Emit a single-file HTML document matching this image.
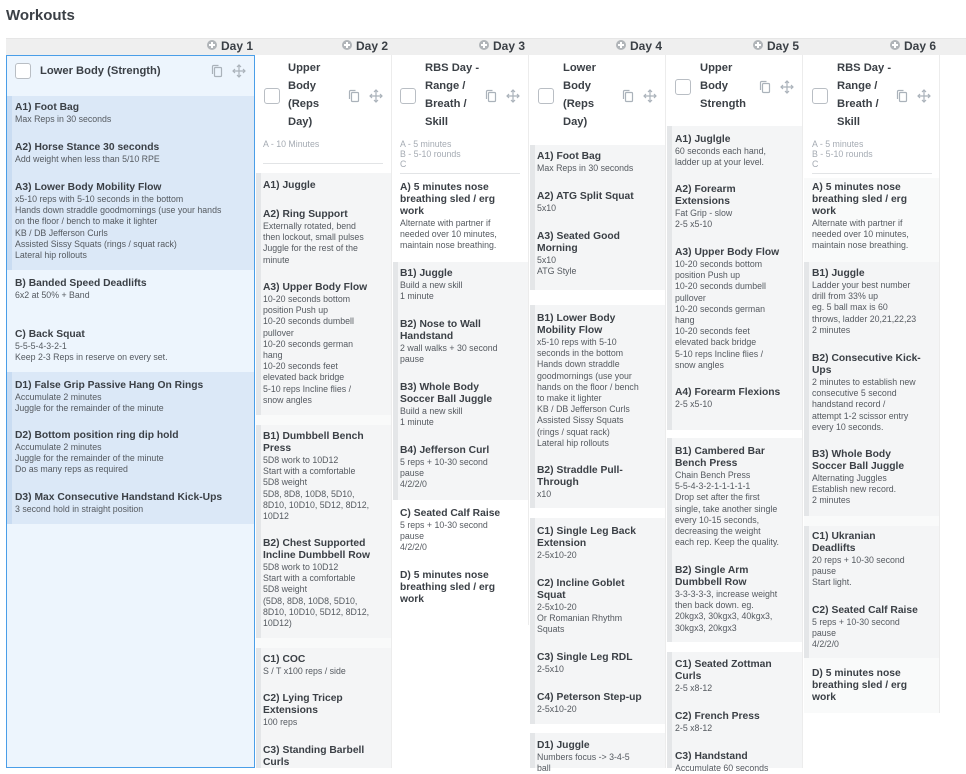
<!DOCTYPE html>
<html><head><meta charset="utf-8"><style>
*{margin:0;padding:0;box-sizing:border-box}
body{width:966px;height:768px;overflow:hidden;background:#fff;font-family:"Liberation Sans",sans-serif;color:#3b4046;position:relative}
.abs{position:absolute}
h1{position:absolute;left:6px;top:7px;font-size:15px;font-weight:bold;color:#3b4046}
.hdr{position:absolute;left:6px;top:38px;width:960px;height:17px;background:#efefef;border-top:1px solid #e6e6e6}
.day{position:absolute;top:39px;font-size:12px;font-weight:bold;color:#3b4046;white-space:nowrap;line-height:15px}
.day i{display:inline-block;width:10px;height:10px;border-radius:50%;background:#b0b4b8;margin-right:4px;position:relative;top:0px}
.day i:before,.day i:after{content:"";position:absolute;background:#fff}
.day i:before{left:2px;top:4px;width:6px;height:2px}
.day i:after{left:4px;top:2px;width:2px;height:6px}
.card{position:absolute;top:55px;background:#fff;border-right:1px solid #ececec}
.body{position:absolute;background:#f9fafa}
.g{position:absolute;background:#f4f5f6;border-left:5px solid #e4e6e8}
.g1{position:absolute;background:#dbe8f7;border-left:5px solid #c9dcf2}
.it{position:absolute;white-space:nowrap}
.it b{display:block;font-size:10.3px;line-height:12px;font-weight:bold;color:#3b4046}
.it span{display:block;font-size:8.8px;line-height:11.2px;color:#555a60}
.ht{position:absolute;font-size:11.2px;line-height:18px;font-weight:bold;color:#3b4046;white-space:nowrap}
.cb{position:absolute;width:16px;height:16px;border:1px solid #b9bec4;border-radius:3px;background:#fff}
.note{position:absolute;font-size:8.8px;line-height:10px;color:#a5abb3;white-space:nowrap}
.div{position:absolute;height:1px;background:#e2e4e6}
</style></head><body>
<h1>Workouts</h1>
<div class="hdr"></div>
<div class="day" style="left:207px"><i></i>Day 1</div>
<div class="day" style="left:342px"><i></i>Day 2</div>
<div class="day" style="left:479px"><i></i>Day 3</div>
<div class="day" style="left:616px"><i></i>Day 4</div>
<div class="day" style="left:753px"><i></i>Day 5</div>
<div class="day" style="left:890px"><i></i>Day 6</div>

<!-- Day1 -->
<div class="card" style="left:6px;width:249px;height:713px;background:#edf5fd;border:1px solid #4a9ee8"></div>
<div class="cb" style="left:15px;top:63px"></div>
<div class="ht" style="left:40px;top:62px">Lower Body (Strength)</div>
<svg class="abs" style="left:211px;top:64px" width="36" height="14" viewBox="0 0 36 14" fill="none" stroke="#aab2ba" stroke-width="1.2"><rect x="3.5" y="3.5" width="7" height="9" rx="1"/><path d="M1.5 10V2.5a1 1 0 0 1 1-1h5"/><path d="M28 1v12M22 7h12M26 3l2-2 2 2M26 11l2 2 2-2M24 5l-2 2 2 2M32 5l2 2-2 2"/></svg>
<div class="g1" style="left:7px;top:96px;width:247px;height:174px"></div>
<div class="g1" style="left:7px;top:372px;width:247px;height:152px"></div>
<div class="it" style="left:15px;top:102px"><b>A1) Foot Bag</b><span>Max Reps in 30 seconds</span></div>
<div class="it" style="left:15px;top:142px"><b>A2) Horse Stance 30 seconds</b><span>Add weight when less than 5/10 RPE</span></div>
<div class="it" style="left:15px;top:182px"><b>A3) Lower Body Mobility Flow</b><span>x5-10 reps with 5-10 seconds in the bottom<br>Hands down straddle goodmornings (use your hands<br>on the floor / bench to make it lighter<br>KB / DB Jefferson Curls<br>Assisted Sissy Squats (rings / squat rack)<br>Lateral hip rollouts</span></div>
<div class="it" style="left:15px;top:278px"><b>B) Banded Speed Deadlifts</b><span>6x2 at 50% + Band</span></div>
<div class="it" style="left:15px;top:329px"><b>C) Back Squat</b><span>5-5-5-4-3-2-1<br>Keep 2-3 Reps in reserve on every set.</span></div>
<div class="it" style="left:15px;top:380px"><b>D1) False Grip Passive Hang On Rings</b><span>Accumulate 2 minutes<br>Juggle for the remainder of the minute</span></div>
<div class="it" style="left:15px;top:430px"><b>D2) Bottom position ring dip hold</b><span>Accumulate 2 minutes<br>Juggle for the remainder of the minute<br>Do as many reps as required</span></div>
<div class="it" style="left:15px;top:492px"><b>D3) Max Consecutive Handstand Kick-Ups</b><span>3 second hold in straight position</span></div>

<!-- Day2 -->
<div class="card" style="left:256px;width:136px;height:713px"></div>
<div class="body" style="left:256px;top:173px;width:135px;height:595px"></div>
<div class="cb" style="left:264px;top:88px"></div>
<div class="ht" style="left:288px;top:59px">Upper<br>Body<br>(Reps<br>Day)</div>
<svg class="abs" style="left:348px;top:89px" width="36" height="14" viewBox="0 0 36 14" fill="none" stroke="#aab2ba" stroke-width="1.2"><rect x="3.5" y="3.5" width="7" height="9" rx="1"/><path d="M1.5 10V2.5a1 1 0 0 1 1-1h5"/><path d="M28 1v12M22 7h12M26 3l2-2 2 2M26 11l2 2 2-2M24 5l-2 2 2 2M32 5l2 2-2 2"/></svg>
<div class="note" style="left:263px;top:139px">A - 10 Minutes</div>
<div class="div" style="left:263px;top:163px;width:120px"></div>
<div class="g" style="left:256px;top:173px;width:135px;height:242px"></div>
<div class="g" style="left:256px;top:425px;width:135px;height:213px"></div>
<div class="g" style="left:256px;top:648px;width:135px;height:120px"></div>
<div class="it" style="left:263px;top:180px"><b>A1) Juggle</b></div>
<div class="it" style="left:263px;top:209px"><b>A2) Ring Support</b><span>Externally rotated, bend<br>then lockout, small pulses<br>Juggle for the rest of the<br>minute</span></div>
<div class="it" style="left:263px;top:282px"><b>A3) Upper Body Flow</b><span>10-20 seconds bottom<br>position Push up<br>10-20 seconds dumbell<br>pullover<br>10-20 seconds german<br>hang<br>10-20 seconds feet<br>elevated back bridge<br>5-10 reps Incline flies /<br>snow angles</span></div>
<div class="it" style="left:263px;top:431px"><b>B1) Dumbbell Bench<br>Press</b><span>5D8 work to 10D12<br>Start with a comfortable<br>5D8 weight<br>5D8, 8D8, 10D8, 5D10,<br>8D10, 10D10, 5D12, 8D12,<br>10D12</span></div>
<div class="it" style="left:263px;top:538px"><b>B2) Chest Supported<br>Incline Dumbbell Row</b><span>5D8 work to 10D12<br>Start with a comfortable<br>5D8 weight<br>(5D8, 8D8, 10D8, 5D10,<br>8D10, 10D10, 5D12, 8D12,<br>10D12)</span></div>
<div class="it" style="left:263px;top:654px"><b>C1) COC</b><span>S / T x100 reps / side</span></div>
<div class="it" style="left:263px;top:693px"><b>C2) Lying Tricep<br>Extensions</b><span>100 reps</span></div>
<div class="it" style="left:263px;top:745px"><b>C3) Standing Barbell<br>Curls</b></div>

<!-- Day3 -->
<div class="card" style="left:393px;width:136px;height:570px"></div>
<div class="cb" style="left:400px;top:88px"></div>
<div class="ht" style="left:425px;top:59px">RBS Day -<br>Range /<br>Breath /<br>Skill</div>
<svg class="abs" style="left:485px;top:89px" width="36" height="14" viewBox="0 0 36 14" fill="none" stroke="#aab2ba" stroke-width="1.2"><rect x="3.5" y="3.5" width="7" height="9" rx="1"/><path d="M1.5 10V2.5a1 1 0 0 1 1-1h5"/><path d="M28 1v12M22 7h12M26 3l2-2 2 2M26 11l2 2 2-2M24 5l-2 2 2 2M32 5l2 2-2 2"/></svg>
<div class="note" style="left:400px;top:139px">A - 5 minutes<br>B - 5-10 rounds<br>C</div>
<div class="div" style="left:400px;top:173px;width:120px"></div>
<div class="g" style="left:393px;top:262px;width:135px;height:238px"></div>
<div class="it" style="left:400px;top:182px"><b>A) 5 minutes nose<br>breathing sled / erg<br>work</b><span>Alternate with partner if<br>needed over 10 minutes,<br>maintain nose breathing.</span></div>
<div class="it" style="left:400px;top:268px"><b>B1) Juggle</b><span>Build a new skill<br>1 minute</span></div>
<div class="it" style="left:400px;top:319px"><b>B2) Nose to Wall<br>Handstand</b><span>2 wall walks + 30 second<br>pause</span></div>
<div class="it" style="left:400px;top:382px"><b>B3) Whole Body<br>Soccer Ball Juggle</b><span>Build a new skill<br>1 minute</span></div>
<div class="it" style="left:400px;top:445px"><b>B4) Jefferson Curl</b><span>5 reps + 10-30 second<br>pause<br>4/2/2/0</span></div>
<div class="it" style="left:400px;top:508px"><b>C) Seated Calf Raise</b><span>5 reps + 10-30 second<br>pause<br>4/2/2/0</span></div>
<div class="it" style="left:400px;top:570px"><b>D) 5 minutes nose<br>breathing sled / erg<br>work</b></div>

<!-- Day4 -->
<div class="card" style="left:530px;width:136px;height:713px"></div>
<div class="cb" style="left:538px;top:88px"></div>
<div class="ht" style="left:563px;top:59px">Lower<br>Body<br>(Reps<br>Day)</div>
<svg class="abs" style="left:622px;top:89px" width="36" height="14" viewBox="0 0 36 14" fill="none" stroke="#aab2ba" stroke-width="1.2"><rect x="3.5" y="3.5" width="7" height="9" rx="1"/><path d="M1.5 10V2.5a1 1 0 0 1 1-1h5"/><path d="M28 1v12M22 7h12M26 3l2-2 2 2M26 11l2 2 2-2M24 5l-2 2 2 2M32 5l2 2-2 2"/></svg>
<div class="g" style="left:530px;top:145px;width:135px;height:145px"></div>
<div class="g" style="left:530px;top:305px;width:135px;height:203px"></div>
<div class="g" style="left:530px;top:518px;width:135px;height:206px"></div>
<div class="g" style="left:530px;top:733px;width:135px;height:35px"></div>
<div class="it" style="left:537px;top:151px"><b>A1) Foot Bag</b><span>Max Reps in 30 seconds</span></div>
<div class="it" style="left:537px;top:191px"><b>A2) ATG Split Squat</b><span>5x10</span></div>
<div class="it" style="left:537px;top:231px"><b>A3) Seated Good<br>Morning</b><span>5x10<br>ATG Style</span></div>
<div class="it" style="left:537px;top:313px"><b>B1) Lower Body<br>Mobility Flow</b><span>x5-10 reps with 5-10<br>seconds in the bottom<br>Hands down straddle<br>goodmornings (use your<br>hands on the floor / bench<br>to make it lighter<br>KB / DB Jefferson Curls<br>Assisted Sissy Squats<br>(rings / squat rack)<br>Lateral hip rollouts</span></div>
<div class="it" style="left:537px;top:465px"><b>B2) Straddle Pull-<br>Through</b><span>x10</span></div>
<div class="it" style="left:537px;top:526px"><b>C1) Single Leg Back<br>Extension</b><span>2-5x10-20</span></div>
<div class="it" style="left:537px;top:578px"><b>C2) Incline Goblet<br>Squat</b><span>2-5x10-20<br>Or Romanian Rhythm<br>Squats</span></div>
<div class="it" style="left:537px;top:652px"><b>C3) Single Leg RDL</b><span>2-5x10</span></div>
<div class="it" style="left:537px;top:692px"><b>C4) Peterson Step-up</b><span>2-5x10-20</span></div>
<div class="it" style="left:537px;top:740px"><b>D1) Juggle</b><span>Numbers focus -&gt; 3-4-5<br>ball</span></div>

<!-- Day5 -->
<div class="card" style="left:667px;width:136px;height:713px"></div>
<div class="cb" style="left:675px;top:79px"></div>
<div class="ht" style="left:700px;top:59px">Upper<br>Body<br>Strength</div>
<svg class="abs" style="left:759px;top:80px" width="36" height="14" viewBox="0 0 36 14" fill="none" stroke="#aab2ba" stroke-width="1.2"><rect x="3.5" y="3.5" width="7" height="9" rx="1"/><path d="M1.5 10V2.5a1 1 0 0 1 1-1h5"/><path d="M28 1v12M22 7h12M26 3l2-2 2 2M26 11l2 2 2-2M24 5l-2 2 2 2M32 5l2 2-2 2"/></svg>
<div class="g" style="left:667px;top:126px;width:135px;height:304px"></div>
<div class="g" style="left:667px;top:438px;width:135px;height:204px"></div>
<div class="g" style="left:667px;top:652px;width:135px;height:116px"></div>
<div class="it" style="left:675px;top:134px"><b>A1) Juglgle</b><span>60 seconds each hand,<br>ladder up at your level.</span></div>
<div class="it" style="left:675px;top:184px"><b>A2) Forearm<br>Extensions</b><span>Fat Grip - slow<br>2-5 x5-10</span></div>
<div class="it" style="left:675px;top:247px"><b>A3) Upper Body Flow</b><span>10-20 seconds bottom<br>position Push up<br>10-20 seconds dumbell<br>pullover<br>10-20 seconds german<br>hang<br>10-20 seconds feet<br>elevated back bridge<br>5-10 reps Incline flies /<br>snow angles</span></div>
<div class="it" style="left:675px;top:387px"><b>A4) Forearm Flexions</b><span>2-5 x5-10</span></div>
<div class="it" style="left:675px;top:446px"><b>B1) Cambered Bar<br>Bench Press</b><span>Chain Bench Press<br>5-5-4-3-2-1-1-1-1-1<br>Drop set after the first<br>single, take another single<br>every 10-15 seconds,<br>decreasing the weight<br>each rep. Keep the quality.</span></div>
<div class="it" style="left:675px;top:565px"><b>B2) Single Arm<br>Dumbbell Row</b><span>3-3-3-3-3, increase weight<br>then back down. eg.<br>20kgx3, 30kgx3, 40kgx3,<br>30kgx3, 20kgx3</span></div>
<div class="it" style="left:675px;top:659px"><b>C1) Seated Zottman<br>Curls</b><span>2-5 x8-12</span></div>
<div class="it" style="left:675px;top:711px"><b>C2) French Press</b><span>2-5 x8-12</span></div>
<div class="it" style="left:675px;top:751px"><b>C3) Handstand</b><span>Accumulate 60 seconds</span></div>

<!-- Day6 -->
<div class="card" style="left:804px;width:136px;height:658px"></div>
<div class="body" style="left:804px;top:178px;width:135px;height:535px"></div>
<div class="cb" style="left:812px;top:88px"></div>
<div class="ht" style="left:837px;top:59px">RBS Day -<br>Range /<br>Breath /<br>Skill</div>
<svg class="abs" style="left:896px;top:89px" width="36" height="14" viewBox="0 0 36 14" fill="none" stroke="#aab2ba" stroke-width="1.2"><rect x="3.5" y="3.5" width="7" height="9" rx="1"/><path d="M1.5 10V2.5a1 1 0 0 1 1-1h5"/><path d="M28 1v12M22 7h12M26 3l2-2 2 2M26 11l2 2 2-2M24 5l-2 2 2 2M32 5l2 2-2 2"/></svg>
<div class="note" style="left:812px;top:139px">A - 5 minutes<br>B - 5-10 rounds<br>C</div>
<div class="div" style="left:812px;top:173px;width:120px"></div>
<div class="g" style="left:804px;top:262px;width:135px;height:254px"></div>
<div class="g" style="left:804px;top:526px;width:135px;height:132px"></div>
<div class="it" style="left:812px;top:182px"><b>A) 5 minutes nose<br>breathing sled / erg<br>work</b><span>Alternate with partner if<br>needed over 10 minutes,<br>maintain nose breathing.</span></div>
<div class="it" style="left:812px;top:268px"><b>B1) Juggle</b><span>Ladder your best number<br>drill from 33% up<br>eg. 5 ball max is 60<br>throws, ladder 20,21,22,23<br>2 minutes</span></div>
<div class="it" style="left:812px;top:353px"><b>B2) Consecutive Kick-<br>Ups</b><span>2 minutes to establish new<br>consecutive 5 second<br>handstand record /<br>attempt 1-2 scissor entry<br>every 10 seconds.</span></div>
<div class="it" style="left:812px;top:449px"><b>B3) Whole Body<br>Soccer Ball Juggle</b><span>Alternating Juggles<br>Establish new record.<br>2 minutes</span></div>
<div class="it" style="left:812px;top:531px"><b>C1) Ukranian<br>Deadlifts</b><span>20 reps + 10-30 second<br>pause<br>Start light.</span></div>
<div class="it" style="left:812px;top:605px"><b>C2) Seated Calf Raise</b><span>5 reps + 10-30 second<br>pause<br>4/2/2/0</span></div>
<div class="it" style="left:812px;top:668px"><b>D) 5 minutes nose<br>breathing sled / erg<br>work</b></div>
</body></html>
